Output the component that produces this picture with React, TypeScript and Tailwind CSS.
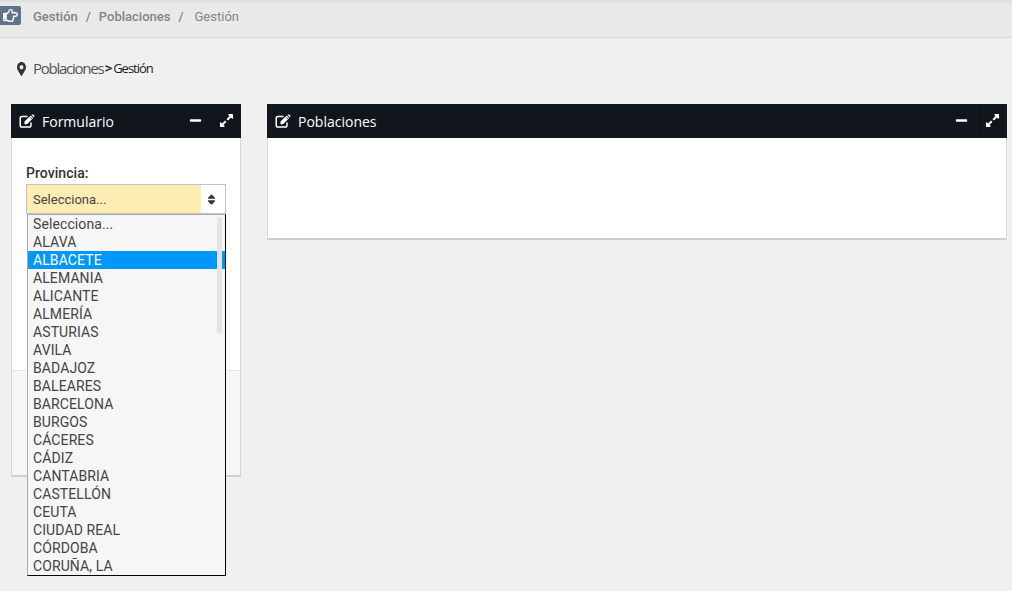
import { FaExpandAlt, FaMapMarkerAlt, FaMinus, FaRegHandPointRight, FaSort } from "react-icons/fa";

const provincias = [
  "Selecciona...", "ALAVA", "ALBACETE", "ALEMANIA", "ALICANTE", "ALMERÍA", "ASTURIAS", "AVILA", "BADAJOZ", "BALEARES",
  "BARCELONA", "BURGOS", "CÁCERES", "CÁDIZ", "CANTABRIA", "CASTELLÓN", "CEUTA", "CIUDAD REAL", "CÓRDOBA", "CORUÑA, LA",
];

// pencil-square-o, not in the packages in this shape
function EditIcon() {
  return (
    <svg viewBox="0 0 16 14" className="ml-[8px] h-[14px] w-[16px] shrink-0" fill="none">
      <path d="M8.5 2.5H3A1.8 1.8 0 0 0 1.2 4.3v6.9A1.8 1.8 0 0 0 3 13h7.2a1.8 1.8 0 0 0 1.8-1.8V8.5" stroke="white" strokeWidth="1.5" />
      <path d="M5.5 7.6 11.6 1.5l2.6 2.6-6.1 6.1H5.5z" fill="white" />
      <path d="M10.6 2.6l2.5 2.5" stroke="#11161d" strokeWidth="0.7" />
      <path d="M14.2 0.6l1.4 1.4-0.9 1.2-2.4-2.4z" fill="white" />
    </svg>
  );
}

function WidgetHeader({ title }: { title: string }) {
  return (
    <div className="flex h-[34px] items-center bg-[#11161d] text-white">
      <EditIcon />
      <span className="ml-[7px] pt-[1px] font-['Open_Sans',sans-serif] text-[14px]">{title}</span>
      <div className="ml-auto flex h-full items-center">
        <div className="flex h-full w-[31px] items-center justify-center border-l border-[#141a21] pb-[1px]">
          <FaMinus className="text-[13px]" />
        </div>
        <div className="flex h-full w-[31px] items-center justify-center border-l border-[#141a21] pb-[2px]">
          <FaExpandAlt className="text-[15px]" />
        </div>
      </div>
    </div>
  );
}

export default function App() {
  return (
    <div className="h-[591px] w-full overflow-hidden bg-[#f0f0f0] font-['Roboto',sans-serif] text-[#333]">
      <div className="flex h-[38px] items-start border-b border-[#d8d8d8] bg-gradient-to-b from-[#dcdcdc] from-0% via-[#e9e9e9] via-10% to-[#e9e9e9] pt-[6px] text-[13px] font-medium text-[#848484]">
        <div className="flex h-[19px] w-[21px] items-center justify-center rounded-r-[2px] bg-[#5f7387] text-white">
          <FaRegHandPointRight className="text-[15px]" />
        </div>
        <span className="ml-[12px] leading-[22px]">Gestión</span>
        <span className="ml-[8px] leading-[22px]">/</span>
        <span className="ml-[8px] leading-[22px]">Poblaciones</span>
        <span className="ml-[8px] leading-[22px]">/</span>
        <span className="ml-[11px] font-normal leading-[22px]">Gestión</span>
      </div>

      <div className="flex h-[66px] items-center pb-[5px] pl-[17px]">
        <FaMapMarkerAlt className="h-[14px] w-[9px] text-[#333]" preserveAspectRatio="none" />
        <span className="ml-[7px] font-['Open_Sans',sans-serif] text-[15px] tracking-[-1.25px] text-[#555]">Poblaciones</span>
        <span className="ml-[1px] text-[15px] font-medium text-[#333]">&gt;</span>
        <span className="ml-[1px] font-['Open_Sans',sans-serif] text-[13px] tracking-[-1px] text-[#222]">Gestión</span>
      </div>

      <div className="flex items-start gap-[26px] pl-[11px] pr-[5px]">
        <div className="relative w-[230px] shrink-0 border-x border-b-2 border-[#cfcfcf] border-x-[#d8d8d8]">
          <div className="-mx-px">
            <WidgetHeader title="Formulario" />
          </div>
          <div className="h-[232px] bg-white px-[14px] pt-[27px]">
            <label className="block text-[14px] font-medium leading-[17px] tracking-[0.05px] text-[#333]">Provincia:</label>
            <div className="mt-[2px] flex h-[30px] items-stretch border border-[#c4c4c4] bg-[#fdedb2] text-[13px]">
              <span className="flex-1 pl-[6px] leading-[30px] text-[#444]">Selecciona...</span>
              <span className="flex w-[24px] items-center justify-center bg-white pr-[4px]">
                <FaSort className="text-[13px] text-[#333]" />
              </span>
            </div>
          </div>
          <div className="h-[105px] border-t border-[#e3e3e3] bg-[#f6f6f6]" />

          <div className="absolute left-[15px] top-[110px] h-[362px] w-[199px] overflow-hidden border border-black border-l-[#aaa] border-t-[#aaa] bg-[#f6f6f6]">
            {provincias.map((p, i) => (
              <div
                key={p}
                className={
                  i === 2
                    ? "h-[18px] bg-[#0097fb] pl-[5px] text-[14px] leading-[18px] tracking-[0.1px] text-white"
                    : "h-[18px] pl-[5px] text-[14px] leading-[18px] tracking-[0.1px] text-[#444]"
                }
              >
                {p}
              </div>
            ))}
            <div className="absolute right-[3px] top-[2px] h-[117px] w-[5px] rounded-full bg-[#e4e4e4]" />
          </div>
        </div>

        <div className="flex-1 border-x border-b-2 border-[#cfcfcf] border-x-[#d8d8d8]">
          <div className="-mx-px">
            <WidgetHeader title="Poblaciones" />
          </div>
          <div className="h-[100px] bg-white" />
        </div>
      </div>
    </div>
  );
}
